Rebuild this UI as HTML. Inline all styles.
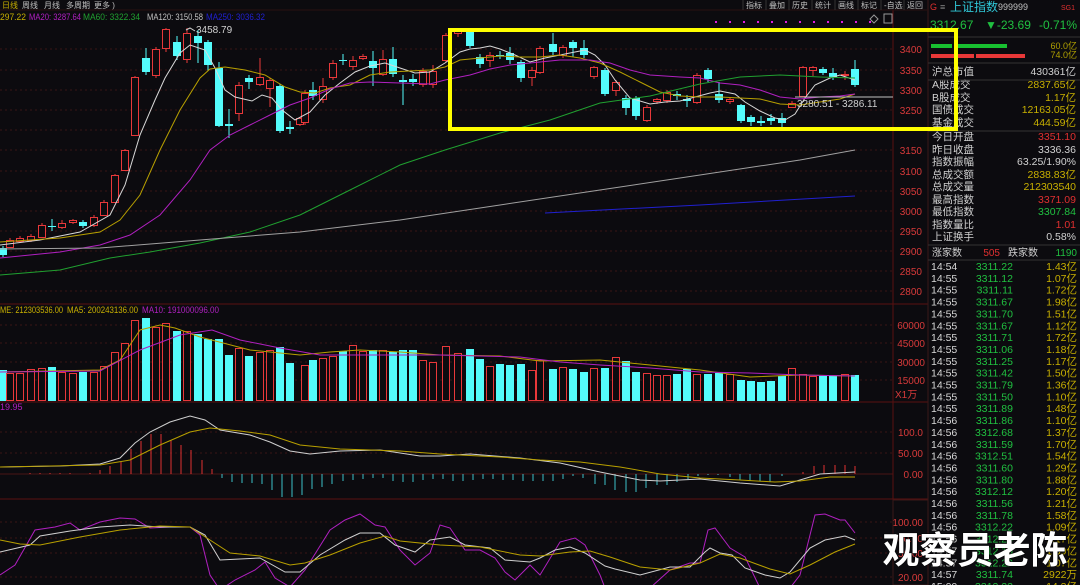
<!DOCTYPE html><html><head><meta charset="utf-8"><style>
body{margin:0;background:#0c0b0f;width:1080px;height:585px;overflow:hidden;font-family:"Liberation Sans","Noto Sans CJK SC",sans-serif;}
svg{position:absolute;left:0;top:0}
text{font-family:"Liberation Sans","Noto Sans CJK SC",sans-serif}
</style></head><body>
<svg id="s" width="1080" height="585" xmlns="http://www.w3.org/2000/svg"></svg>
<script>
const S=document.getElementById('s');let h='';
const R='#e8383a',C='#54fcfc',BG='#0c0b0f';
function pl(pts,c,w){h+=`<polyline fill="none" stroke="${c}" stroke-width="${w||1}" points="${pts.map(p=>p.join(',')).join(' ')}"/>`;}
function t(x,y,s,c,sz,anc,extra){h+=`<text x="${x}" y="${y}" fill="${c}" font-size="${sz||10}" ${anc?`text-anchor="${anc}"`:''} ${extra||''}>${s}</text>`;}
[49,70,90,110,130,150,171,191,211,231,251,271,291].forEach(y=>h+=`<line x1="0" y1="${y}" x2="893" y2="${y}" stroke="#3a1414" stroke-dasharray="2,3"/>`);
[325,343,362,380,432,453,522,538,553,577].forEach(y=>h+=`<line x1="0" y1="${y}" x2="893" y2="${y}" stroke="#3a1414" stroke-dasharray="2,3"/>`);
h+=`<line x1="0" y1="474" x2="893" y2="474" stroke="#4a1414"/>`;
[304,402,499].forEach(y=>h+=`<line x1="0" y1="${y}" x2="928" y2="${y}" stroke="#5a1010"/>`);
h+=`<line x1="893" y1="10" x2="893" y2="585" stroke="#5a1010"/><line x1="928" y1="0" x2="928" y2="585" stroke="#3a1818"/>`;
h+=`<line x1="0" y1="10" x2="928" y2="10" stroke="#2a1010"/>`;
[[3400,49],[3350,70],[3300,90],[3250,110],[3150,150],[3100,171],[3050,191],[3000,211],[2950,231],[2900,251],[2850,271],[2800,291]].forEach(a=>t(922,a[1]+4,a[0],'#d83a3a',10,'end'));
[[60000,325],[45000,343],[30000,362],[15000,380]].forEach(a=>t(925,a[1]+4,a[0],'#d83a3a',10,'end'));
t(895,398,'X1万','#d83a3a',10);
[['100.0',432],['50.00',453],['0.00',474]].forEach(a=>t(923,a[1]+4,a[0],'#d83a3a',10,'end'));
[['100.00',522],['80.00',538],['50.00',553],['20.00',577]].forEach(a=>t(923,a[1]+4,a[0],'#d83a3a',10,'end'));
h+=`<rect x="893" y="500" width="35" height="85" fill="none" stroke="#3a1818"/>`;
const K=[[3,248,255,246,257,'c'],[10,240,247,238,248,'r'],[20,238,241,236,243,'r'],[31,236,240,234,242,'r'],[42,225,237,223,238,'r'],[52,226,227,219,231,'c'],[62,223,227,220,229,'r'],[73,220,222,219,224,'r'],[83,222,226,220,228,'c'],[94,217,225,215,227,'r'],[104,202,215,200,216,'r'],[115,175,202,174,203,'r'],[125,150,170,149,171,'r'],[135,77,135,76,136,'r'],[146,58,72,48,75,'c'],[156,49,75,47,78,'r'],[166,29,48,28,52,'r'],[177,42,56,36,60,'c'],[187,33,59,28,63,'r'],[198,36,43,30,63,'c'],[208,42,65,40,71,'c'],[219,68,126,62,127,'c'],[229,124,126,109,138,'c'],[239,85,113,82,121,'r'],[249,78,82,75,89,'c'],[260,77,84,58,86,'r'],[270,80,88,78,107,'r'],[280,86,131,84,133,'c'],[290,127,129,121,134,'c'],[300,118,124,117,126,'r'],[305,93,122,90,125,'r'],[313,90,96,82,100,'c'],[323,86,99,78,103,'r'],[333,63,77,60,80,'r'],[343,60,61,54,65,'c'],[353,60,66,56,70,'r'],[363,56,58,54,60,'r'],[373,61,68,51,86,'c'],[383,59,74,50,76,'r'],[393,59,74,47,77,'c'],[403,80,82,75,105,'c'],[413,79,82,74,86,'c'],[423,71,84,68,87,'r'],[433,71,84,65,88,'r'],[446,35,60,33,62,'r'],[458,30,33,29,37,'r'],[470,32,46,31,48,'c'],[480,57,64,54,68,'c'],[490,55,60,52,67,'r'],[500,55,56,51,59,'c'],[510,53,60,47,64,'c'],[521,62,78,60,82,'c'],[532,70,77,67,86,'r'],[540,48,72,46,74,'r'],[553,44,52,33,55,'c'],[563,47,55,45,58,'r'],[573,42,48,40,57,'c'],[584,48,55,40,58,'c'],[594,67,76,66,79,'r'],[605,70,94,68,96,'c'],[616,82,90,80,96,'r'],[626,98,108,95,115,'c'],[636,98,116,96,120,'c'],[647,107,120,105,122,'r'],[657,99,101,98,104,'r'],[667,92,100,90,103,'r'],[677,94,96,91,100,'c'],[687,99,101,95,107,'c'],[697,75,102,73,104,'r'],[708,70,79,68,82,'c'],[719,94,100,82,103,'c'],[730,99,101,97,104,'r'],[741,105,121,104,123,'c'],[751,117,122,115,126,'c'],[761,121,123,116,126,'c'],[771,118,121,114,125,'c'],[782,118,123,113,128,'c'],[792,103,107,101,108,'r'],[803,67,96,66,97,'r'],[813,67,70,66,76,'r'],[823,69,73,67,75,'c'],[833,73,77,68,80,'c'],[845,74,75,71,80,'r'],[855,69,85,60,87,'c']];
K.forEach(k=>{const col=k[5]=='c'?C:R;h+=`<line x1="${k[0]}" y1="${k[3]}" x2="${k[0]}" y2="${k[4]}" stroke="${col}"/>`;
const hh=Math.max(1,k[2]-k[1]);if(k[5]=='c')h+=`<rect x="${k[0]-4}" y="${k[1]}" width="8" height="${hh}" fill="${C}"/>`;else h+=`<rect x="${k[0]-3.5}" y="${k[1]+.5}" width="7" height="${hh}" fill="${BG}" stroke="${R}"/>`;});
pl([[0,245],[40,240],[80,232],[110,215],[125,185],[140,135],[155,100],[165,78],[180,53],[190,45],[205,50],[215,68],[225,90],[235,97],[252,101],[262,95],[272,98],[282,110],[295,120],[310,112],[325,95],[340,83],[355,72],[370,66],[385,63],[400,68],[415,73],[430,72],[445,63],[460,52],[470,49],[480,48],[490,46],[500,49],[515,55],[530,62],[545,58],[560,55],[575,52],[585,50],[595,55],[605,65],[615,80],[630,98],[650,104],[665,102],[680,101],[695,97],[710,93],[720,91],[735,94],[745,102],[760,111],[775,118],[785,120],[795,114],[805,98],[815,85],[830,78],[840,75],[855,80]],'#d8d8d8');
pl([[0,242],[60,238],[100,232],[120,220],[140,195],[160,150],[180,110],[200,78],[210,69],[225,67],[245,70],[265,75],[285,87],[300,92],[315,93],[330,88],[350,85],[370,75],[390,72],[410,71],[430,70],[445,67],[460,60],[480,58],[500,56],[520,57],[540,57],[560,55],[580,58],[600,63],[620,72],[640,82],[660,92],[680,96],[700,97],[720,97],[740,98],[760,99],[780,104],[800,105],[820,102],[840,99],[855,94]],'#b8a000');
pl([[0,258],[60,252],[100,245],[130,235],[160,215],[190,180],[210,150],[230,135],[250,125],[270,115],[290,105],[310,98],[330,89],[350,83],[370,82],[400,83],[430,84],[445,80],[470,75],[490,69],[510,65],[540,62],[560,60],[590,60],[610,63],[630,70],[650,75],[680,77],[700,78],[720,83],[740,85],[760,90],[780,97],[800,99],[820,97],[840,96],[855,94]],'#b020c0');
pl([[0,275],[60,270],[110,258],[150,252],[200,243],[250,232],[300,215],[350,190],[400,165],[445,150],[500,133],[550,120],[600,103],[650,96],[700,84],[740,77],[780,75],[820,77],[855,78]],'#20a030');
pl([[0,249],[100,248],[200,240],[300,232],[400,220],[500,205],[600,190],[700,175],[800,160],[855,150]],'#a0a0a0');
pl([[545,213],[700,205],[855,196]],'#2020d0');
h+=`<line x1="795" y1="97" x2="893" y2="97" stroke="#c0c0c0"/>`;
t(797,107,'3280.51 - 3286.11','#d0d0d0',10);
t(196,33,'3458.79','#d0d0d0',10);
pl([[186,30],[190,28],[195,31]],'#d0d0d0');
for(let x=715;x<880;x+=14)h+=`<rect x="${x}" y="21" width="2" height="2" fill="#e020e0"/>`;
h+=`<path d="M874 15 l4 4 l-4 4 l-4 -4z" fill="none" stroke="#999"/><rect x="884" y="14" width="8" height="9" fill="none" stroke="#999"/>`;
const VT=[370,373,373,369,368,367,372,373,372,372,366,352,343,320,318,327,323,331,331,334,339,339,355,348,356,352,350,347,363,365,360,358,356,351,345,351,350,350,352,350,350,360,362,346,353,349,359,366,364,365,364,370,360,369,367,369,372,368,368,357,361,372,373,375,375,374,369,374,374,373,374,380,381,382,381,376,368,374,376,376,376,374];
K.forEach((k,i)=>{if(i==29)return;const y=VT[i>29?i-1:i]||375;if(k[5]=='c')h+=`<rect x="${k[0]-4}" y="${y}" width="8" height="${401-y}" fill="${C}"/>`;else h+=`<rect x="${k[0]-3.5}" y="${y+.5}" width="7" height="${400-y}" fill="${BG}" stroke="${R}"/>`;});
pl([[0,372],[100,370],[120,360],[140,330],[160,325],[175,328],[200,337],[250,350],[300,355],[330,352],[360,350],[400,352],[440,355],[500,356],[540,361],[600,360],[650,365],[700,370],[750,377],[800,375],[855,376]],'#b8a000');
pl([[0,372],[100,371],[140,350],[180,335],[212,330],[240,340],[280,348],[320,355],[380,355],[440,355],[520,357],[560,362],[600,365],[650,368],[700,372],[750,373],[800,375],[855,376]],'#b020c0');
t(0,313,'ME: 212303536.00','#c8b000',9,'','textLength="63" lengthAdjust="spacingAndGlyphs"');t(67,313,'MA5: 200243136.00','#c8b000',9,'','textLength="71" lengthAdjust="spacingAndGlyphs"');t(142,313,'MA10: 191000096.00','#b020c0',9,'','textLength="77" lengthAdjust="spacingAndGlyphs"');
t(0,410,'19.95','#b020c0',9);
const MR=[[30,473],[40,473],[50,473],[60,473],[70,473],[90,473],[100,470],[110,466],[121,462],[131,449],[141,441],[151,434],[161,434],[171,440],[181,445],[191,450],[202,460],[212,469]];
MR.forEach(m=>h+=`<line x1="${m[0]}" y1="474" x2="${m[0]}" y2="${m[1]}" stroke="#e03030"/>`);
const MC=[[222,478],[232,482],[242,483],[252,483],[262,484],[272,490],[282,497],[292,497],[302,495],[312,489],[322,487],[332,484],[343,481],[353,480],[363,479],[373,478],[383,478],[393,481],[403,482],[413,482],[423,480],[433,479],[443,479],[453,481],[463,481],[473,480],[483,479],[493,479],[503,480],[513,480],[523,481],[533,481],[543,481],[553,481],[563,479],[573,476],[583,478],[595,484],[605,485],[615,490],[626,492],[636,492],[646,488],[657,485],[667,485],[677,482],[688,479],[698,476],[708,475],[718,475],[730,477],[740,480],[750,481],[760,481],[770,482],[782,476]];
MC.forEach(m=>h+=`<line x1="${m[0]}" y1="474" x2="${m[0]}" y2="${m[1]}" stroke="#3cc0c8"/>`);
[[803,472],[814,466],[824,465],[835,465],[845,465],[855,466]].forEach(m=>h+=`<line x1="${m[0]}" y1="474" x2="${m[0]}" y2="${m[1]}" stroke="#e03030"/>`);
pl([[0,467],[60,466],[100,464],[120,458],[135,443],[150,432],[170,422],[190,416],[205,420],[220,430],[250,435],[270,442],[290,451],[310,454],[340,451],[380,450],[420,456],[440,456],[470,454],[520,458],[560,463],[600,472],[640,480],[660,481],[700,479],[740,483],[780,486],[800,480],[820,474],[855,472]],'#d0d0d0');
pl([[0,467],[100,465],[130,460],[160,445],[190,432],[210,428],[240,431],[270,435],[300,445],[340,449],[400,451],[440,454],[500,457],[540,460],[580,462],[620,467],[660,474],[700,478],[740,480],[775,482],[800,481],[830,477],[855,477]],'#b8a000');
pl([[0,575],[15,565],[35,530],[55,527],[70,523],[80,530],[100,522],[120,518],[135,519],[150,528],[170,527],[190,527],[200,535],[210,575],[220,590],[235,580],[255,570],[265,562],[275,578],[290,587],[305,570],[330,530],[345,520],[360,514],[375,525],[385,527],[400,550],[415,565],[430,553],[440,525],[450,528],[465,550],[480,550],[495,558],[505,572],[515,580],[530,565],[540,575],[560,542],[575,538],[585,545],[600,575],[605,588],[650,588],[670,570],[690,563],[700,563],[708,530],[715,528],[730,548],[745,557],[760,588],[790,588],[800,575],[810,535],[815,515],[825,514],[840,520],[845,520],[855,533]],'#b020c0');
pl([[0,552],[30,545],[40,536],[70,531],[100,527],[130,525],[160,527],[190,527],[205,535],[220,560],[260,558],[285,572],[300,572],[320,555],[345,540],[360,533],[380,533],[395,545],[415,552],[430,540],[450,537],[465,545],[490,548],[505,560],[530,562],[540,558],[555,550],[570,547],[585,553],[605,566],[615,569],[640,575],[670,567],[690,567],[705,552],[710,548],[720,553],[732,555],[745,568],[765,575],[780,578],[790,572],[810,548],[825,540],[845,536],[855,540]],'#d0d0d0');
pl([[0,540],[20,544],[40,545],[80,537],[120,530],[160,526],[190,527],[210,540],[230,553],[260,556],[290,565],[305,563],[330,555],[360,543],[385,536],[400,541],[440,545],[480,547],[520,555],[540,556],[570,552],[590,551],[610,557],[640,567],[670,570],[700,563],[720,554],[740,558],[770,569],[790,574],[810,565],[835,552],[855,544]],'#b8a000');
t(2,8,'日线','#c8b000',8);[['周线',22],['月线',44],['多周期',66],['更多 )',94]].forEach(a=>t(a[1],8,a[0],'#c0c0c0',8));
['指标','叠加','历史','统计','画线','标记','-自选','返回'].forEach((s,i)=>{t(746+i*23,8,s,'#c0c0c0',8);h+=`<line x1="${743+i*23}" y1="0" x2="${743+i*23}" y2="10" stroke="#333"/>`});
t(0,20,'297.22','#c8b000',9,'','textLength="26" lengthAdjust="spacingAndGlyphs"');t(29,20,'MA20: 3287.64','#b020c0',9,'','textLength="52" lengthAdjust="spacingAndGlyphs"');t(83,20,'MA60: 3322.34','#20a030',9,'','textLength="57" lengthAdjust="spacingAndGlyphs"');t(147,20,'MA120: 3150.58','#c0c0c0',9,'','textLength="56" lengthAdjust="spacingAndGlyphs"');t(206,20,'MA250: 3036.32','#2020d0',9,'','textLength="59" lengthAdjust="spacingAndGlyphs"');
h+=`<rect x="929" y="0" width="151" height="585" fill="#0c0b0f"/>`;
t(930,10,'G','#e03030',9);t(940,10,'≡','#888',9);t(950,11,'上证指数','#30c8d8',12);t(998,10,'999999','#c0c0c0',9);t(1075,10,'SG1','#e03030',7,'end');
t(930,29,'3312.67','#20c040',12);t(985,29,'▼-23.69','#20c040',12);t(1077,29,'-0.71%','#20c040',12,'end');
h+=`<line x1="928" y1="37" x2="1080" y2="37" stroke="#333"/><rect x="931" y="44" width="76" height="4" fill="#18c030"/><rect x="952" y="44" width="2" height="4" fill="#0c0b0f"/><rect x="931" y="54" width="94" height="4" fill="#e83838"/><rect x="974" y="54" width="2" height="4" fill="#0c0b0f"/>`;
t(1077,49,'60.0亿','#b0a000',9,'end');t(1077,58,'74.0亿','#b0a000',9,'end');
h+=`<line x1="928" y1="63" x2="1080" y2="63" stroke="#333"/>`;
const rows=[['沪总市值','430361亿','#d0d0d0',75],['A股成交','2837.65亿','#c8b000',88],['B股成交','1.17亿','#c8b000',101],['国债成交','12163.05亿','#c8b000',113],['基金成交','444.59亿','#c8b000',126],['今日开盘','3351.10','#e03030',140],['昨日收盘','3336.36','#d0d0d0',153],['指数振幅','63.25/1.90%','#d0d0d0',165],['总成交额','2838.83亿','#c8b000',178],['总成交量','212303540','#c8b000',190],['最高指数','3371.09','#e03030',203],['最低指数','3307.84','#20c040',215],['指数量比','1.01','#e03030',228],['上证换手','0.58%','#d0d0d0',240]];
rows.forEach(r=>{t(932,r[3],r[0],'#d0d0d0',10.5);t(1076,r[3],r[1],r[2],10.5,'end')});
[80,131,245].forEach(y=>h+=`<line x1="928" y1="${y}" x2="1080" y2="${y}" stroke="#333"/>`);
t(932,256,'涨家数','#d0d0d0',10);t(1000,256,'505','#e03030',10,'end');t(1008,256,'跌家数','#d0d0d0',10);t(1077,256,'1190','#20c040',10,'end');
h+=`<line x1="928" y1="260" x2="1080" y2="260" stroke="#333"/>`;
const TR=[['14:54','3311.22','1.43亿'],['14:55','3311.12','1.07亿'],['14:55','3311.11','1.72亿'],['14:55','3311.67','1.98亿'],['14:55','3311.70','1.51亿'],['14:55','3311.67','1.12亿'],['14:55','3311.71','1.72亿'],['14:55','3311.06','1.18亿'],['14:55','3311.25','1.17亿'],['14:55','3311.42','1.50亿'],['14:55','3311.79','1.36亿'],['14:55','3311.50','1.10亿'],['14:55','3311.89','1.48亿'],['14:56','3311.86','1.10亿'],['14:56','3312.68','1.37亿'],['14:56','3311.59','1.70亿'],['14:56','3312.51','1.54亿'],['14:56','3311.60','1.29亿'],['14:56','3311.80','1.88亿'],['14:56','3312.12','1.20亿'],['14:56','3311.56','1.21亿'],['14:56','3311.78','1.58亿'],['14:56','3312.22','1.09亿'],['14:56','3312.24','1.17亿'],['14:57','3312.10','1.09亿'],['14:57','3312.22','1.07亿'],['14:57','3311.74','2922万'],['15:00','3312.22','14.3亿']];
TR.forEach((r,i)=>{const y=270+i*11.85;t(931,y,r[0],'#d8d8d8',10.5);t(1013,y,r[1],'#20c040',10.5,'end');t(1077,y,r[2],'#c8b000',10.5,'end')});
h+=`<rect x="450" y="30" width="506" height="99" fill="none" stroke="#ffff00" stroke-width="4"/>`;
h+=`<text x="975" y="563" fill="#fff" font-size="37" font-weight="bold" text-anchor="middle" stroke="#000" stroke-width="1" paint-order="stroke" font-family="Noto Sans CJK SC,sans-serif">观察员老陈</text>`;
S.innerHTML=h;
</script>
</body></html>
